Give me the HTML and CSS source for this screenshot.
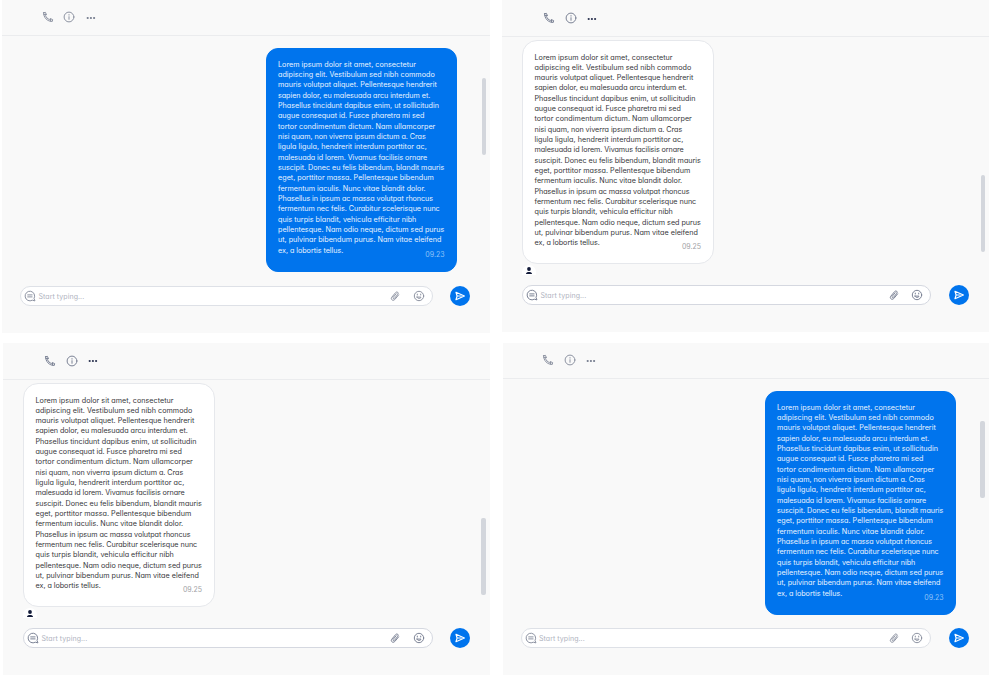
FILE: index.html
```html
<!DOCTYPE html>
<html lang="en">
<head>
<meta charset="utf-8">
<title>Chat</title>
<link rel="stylesheet" href="styles.css">
</head>
<body>
<svg class="sprite" aria-hidden="true">
  <symbol id="phone" viewBox="0 0 12 12"><path d="M1.600 1.700 3.500 1.400 4.300 3.600 3.500 4.700C4.300 6.500 5.500 7.700 7.300 8.500L8.400 7.700 10.600 8.500 10.300 10.400C5.400 10.600 1.400 6.600 1.600 1.700ZM1.800 3.400 4.200 3.500M8.500 7.900 8.600 10.200"/></symbol>
  <symbol id="info" viewBox="0 0 12 12"><circle cx="6" cy="6" r="4.900"/><path d="M6 5.700V8.300M6 3.600V4.100"/></symbol>
  <symbol id="dots" viewBox="0 0 12 12"><circle cx="2.700" cy="6" r="1.100"/><circle cx="5.900" cy="6" r="1.100"/><circle cx="9.100" cy="6" r="1.100"/></symbol>
  <symbol id="bubble" viewBox="0 0 12 12"><path d="M10.200 8.200A4.800 4.800 0 1 0 8.300 10.200L10.600 10.800ZM3.700 4.900H8.100M3.700 6.900H8.100"/></symbol>
  <symbol id="clip" viewBox="0 0 12 12"><path d="M9.600 4.900 5.800 9.500C4.100 11.400 1.200 9.400 2.700 7.300L6.700 2.500C8 1.100 10 2.600 8.900 4.200L5.500 8.300C4.700 9.200 3.500 8.200 4.200 7.300L7.200 3.800"/></symbol>
  <symbol id="smile" viewBox="0 0 12 12"><circle cx="6" cy="6" r="4.700"/><path d="M4.300 4.100V5M7.700 4.100V5M4 7.100H8C7.600 9 4.400 9 4 7.100Z"/></symbol>
  <symbol id="send" viewBox="0 0 12 12"><path d="M2 2.300 10.400 6 2 9.700 3.100 6ZM3.100 6H7"/></symbol>
  <symbol id="user" viewBox="0 0 14 10"><circle cx="7" cy="4" r="1.900"/><path d="M4 9C4 6.400 10 6.400 10 9Z"/></symbol>
</svg>
<main class="board">

<section class="panel p1 soft">
  <header class="bar"><svg class="icon"><use href="#phone"/></svg><svg class="icon"><use href="#info"/></svg><svg class="icon dots"><use href="#dots"/></svg></header>
  <div class="thread">
    <article class="msg sent">
      <p class="text"><span>Lorem ipsum dolor sit amet, consectetur</span> <span>adipiscing elit. Vestibulum sed nibh commodo</span> <span>mauris volutpat aliquet. Pellentesque hendrerit</span> <span>sapien dolor, eu malesuada arcu interdum et.</span> <span>Phasellus tincidunt dapibus enim, ut sollicitudin</span> <span>augue consequat id. Fusce pharetra mi sed</span> <span>tortor condimentum dictum. Nam ullamcorper</span> <span>nisi quam, non viverra ipsum dictum a. Cras</span> <span>ligula ligula, hendrerit interdum porttitor ac,</span> <span>malesuada id lorem. Vivamus facilisis ornare</span> <span>suscipit. Donec eu felis bibendum, blandit mauris</span> <span>eget, porttitor massa. Pellentesque bibendum</span> <span>fermentum iaculis. Nunc vitae blandit dolor.</span> <span>Phasellus in ipsum ac massa volutpat rhoncus</span> <span>fermentum nec felis. Curabitur scelerisque nunc</span> <span>quis turpis blandit, vehicula efficitur nibh</span> <span>pellentesque. Nam odio neque, dictum sed purus</span> <span>ut, pulvinar bibendum purus. Nam vitae eleifend</span> <span>ex, a lobortis tellus.</span></p>
      <time class="time">09.23</time>
    </article>
  </div>
  <footer class="composer">
    <div class="field"><svg class="icon"><use href="#bubble"/></svg><span class="hint">Start typing...</span><svg class="icon"><use href="#clip"/></svg><svg class="icon"><use href="#smile"/></svg></div>
    <button class="send"><svg class="icon"><use href="#send"/></svg></button>
  </footer>
  <i class="scroll"></i>
</section>

<section class="panel p2">
  <header class="bar"><svg class="icon"><use href="#phone"/></svg><svg class="icon"><use href="#info"/></svg><svg class="icon dots"><use href="#dots"/></svg></header>
  <div class="thread">
    <article class="msg">
      <p class="text"><span>Lorem ipsum dolor sit amet, consectetur</span> <span>adipiscing elit. Vestibulum sed nibh commodo</span> <span>mauris volutpat aliquet. Pellentesque hendrerit</span> <span>sapien dolor, eu malesuada arcu interdum et.</span> <span>Phasellus tincidunt dapibus enim, ut sollicitudin</span> <span>augue consequat id. Fusce pharetra mi sed</span> <span>tortor condimentum dictum. Nam ullamcorper</span> <span>nisi quam, non viverra ipsum dictum a. Cras</span> <span>ligula ligula, hendrerit interdum porttitor ac,</span> <span>malesuada id lorem. Vivamus facilisis ornare</span> <span>suscipit. Donec eu felis bibendum, blandit mauris</span> <span>eget, porttitor massa. Pellentesque bibendum</span> <span>fermentum iaculis. Nunc vitae blandit dolor.</span> <span>Phasellus in ipsum ac massa volutpat rhoncus</span> <span>fermentum nec felis. Curabitur scelerisque nunc</span> <span>quis turpis blandit, vehicula efficitur nibh</span> <span>pellentesque. Nam odio neque, dictum sed purus</span> <span>ut, pulvinar bibendum purus. Nam vitae eleifend</span> <span>ex, a lobortis tellus.</span></p>
      <time class="time">09.25</time>
    </article>
    <div class="avatar"><svg><use href="#user"/></svg></div>
  </div>
  <footer class="composer">
    <div class="field"><svg class="icon"><use href="#bubble"/></svg><span class="hint">Start typing...</span><svg class="icon"><use href="#clip"/></svg><svg class="icon"><use href="#smile"/></svg></div>
    <button class="send"><svg class="icon"><use href="#send"/></svg></button>
  </footer>
  <i class="scroll"></i>
</section>

<section class="panel p3">
  <header class="bar"><svg class="icon"><use href="#phone"/></svg><svg class="icon"><use href="#info"/></svg><svg class="icon dots"><use href="#dots"/></svg></header>
  <div class="thread">
    <article class="msg">
      <p class="text"><span>Lorem ipsum dolor sit amet, consectetur</span> <span>adipiscing elit. Vestibulum sed nibh commodo</span> <span>mauris volutpat aliquet. Pellentesque hendrerit</span> <span>sapien dolor, eu malesuada arcu interdum et.</span> <span>Phasellus tincidunt dapibus enim, ut sollicitudin</span> <span>augue consequat id. Fusce pharetra mi sed</span> <span>tortor condimentum dictum. Nam ullamcorper</span> <span>nisi quam, non viverra ipsum dictum a. Cras</span> <span>ligula ligula, hendrerit interdum porttitor ac,</span> <span>malesuada id lorem. Vivamus facilisis ornare</span> <span>suscipit. Donec eu felis bibendum, blandit mauris</span> <span>eget, porttitor massa. Pellentesque bibendum</span> <span>fermentum iaculis. Nunc vitae blandit dolor.</span> <span>Phasellus in ipsum ac massa volutpat rhoncus</span> <span>fermentum nec felis. Curabitur scelerisque nunc</span> <span>quis turpis blandit, vehicula efficitur nibh</span> <span>pellentesque. Nam odio neque, dictum sed purus</span> <span>ut, pulvinar bibendum purus. Nam vitae eleifend</span> <span>ex, a lobortis tellus.</span></p>
      <time class="time">09.25</time>
    </article>
    <div class="avatar"><svg><use href="#user"/></svg></div>
  </div>
  <footer class="composer">
    <div class="field"><svg class="icon"><use href="#bubble"/></svg><span class="hint">Start typing...</span><svg class="icon"><use href="#clip"/></svg><svg class="icon"><use href="#smile"/></svg></div>
    <button class="send"><svg class="icon"><use href="#send"/></svg></button>
  </footer>
  <i class="scroll"></i>
</section>

<section class="panel p4 soft">
  <header class="bar"><svg class="icon"><use href="#phone"/></svg><svg class="icon"><use href="#info"/></svg><svg class="icon dots"><use href="#dots"/></svg></header>
  <div class="thread">
    <article class="msg sent">
      <p class="text"><span>Lorem ipsum dolor sit amet, consectetur</span> <span>adipiscing elit. Vestibulum sed nibh commodo</span> <span>mauris volutpat aliquet. Pellentesque hendrerit</span> <span>sapien dolor, eu malesuada arcu interdum et.</span> <span>Phasellus tincidunt dapibus enim, ut sollicitudin</span> <span>augue consequat id. Fusce pharetra mi sed</span> <span>tortor condimentum dictum. Nam ullamcorper</span> <span>nisi quam, non viverra ipsum dictum a. Cras</span> <span>ligula ligula, hendrerit interdum porttitor ac,</span> <span>malesuada id lorem. Vivamus facilisis ornare</span> <span>suscipit. Donec eu felis bibendum, blandit mauris</span> <span>eget, porttitor massa. Pellentesque bibendum</span> <span>fermentum iaculis. Nunc vitae blandit dolor.</span> <span>Phasellus in ipsum ac massa volutpat rhoncus</span> <span>fermentum nec felis. Curabitur scelerisque nunc</span> <span>quis turpis blandit, vehicula efficitur nibh</span> <span>pellentesque. Nam odio neque, dictum sed purus</span> <span>ut, pulvinar bibendum purus. Nam vitae eleifend</span> <span>ex, a lobortis tellus.</span></p>
      <time class="time">09.23</time>
    </article>
  </div>
  <footer class="composer">
    <div class="field"><svg class="icon"><use href="#bubble"/></svg><span class="hint">Start typing...</span><svg class="icon"><use href="#clip"/></svg><svg class="icon"><use href="#smile"/></svg></div>
    <button class="send"><svg class="icon"><use href="#send"/></svg></button>
  </footer>
  <i class="scroll"></i>
</section>

</main>
</body>
</html>
```
FILE: styles.css
```css
* { box-sizing: border-box; }

body {
  margin: 0;
  background: #fff;
  font-family: Inter, "Liberation Sans", sans-serif;
  font-feature-settings: "cv11";
  font-size: 7.2px;
  overflow: hidden;
}

.sprite { display: none; }

.board {
  display: grid;
  grid-template-columns: 488px 486.500px;
  grid-template-rows: 333px 332px;
  gap: 10px 12px;
  padding-left: 2px;
}

.panel {
  position: relative;
  display: flex;
  flex-direction: column;
  background: #f9f9f9;
  --ink: #7b8295;
  --dots: #2b3350;
  --line: #d5d8e0;
}
.soft { --ink: #8d93a2; --dots: #757c8e; --line: #dee1e7; }

.p1 { --head: 36px; --left: 18px; --right: 33px; --icons: 39.500px; --icon-y: 1px; --top: 11.500px; --bar-y: 78px; --bar-x: 4px; }
.p2 { --head: 37px; --left: 20px; --icons: 41px; --icon-y: 0px; --top: 2.500px; --bar-y: 175px; --bar-x: 3.500px; height: 332px; }
.p3 { --head: 37px; --left: 20px; --icons: 41px; --icon-y: .5px; --top: 2.500px; --bar-y: 175px; --bar-x: 4.500px; margin-left: 1px; }
.p4 { --head: 36px; --left: 17.500px; --right: 32.500px; --icons: 39px; --icon-y: 1px; --top: 11.500px; --bar-y: 78px; --bar-x: 4px; margin-left: 1px; }

.icon {
  width: 12px;
  height: 12px;
  flex: none;
  fill: none;
  stroke: var(--ink);
  stroke-width: 1;
  stroke-linejoin: round;
  stroke-linecap: round;
}

.bar {
  display: flex;
  align-items: center;
  gap: 9.500px;
  height: var(--head);
  padding: 0 0 var(--icon-y) var(--icons);
  border-bottom: 1px solid #ebecee;
}
.dots { fill: var(--dots); stroke: none; margin-top: 1px; }

.thread {
  flex: 1;
  min-height: 0;
  padding: var(--top) var(--right, 0) 0 var(--left);
}

.msg {
  display: flex;
  flex-direction: column;
  width: 191.500px;
  height: 224.500px;
  padding: 12px 11.500px 0;
  border: 1px solid #e6e8ec;
  border-radius: 15px;
  background: #fff;
  color: #38383c;
}
.sent {
  margin-left: auto;
  padding-top: 11px;
  border-color: #0074ed;
  border-radius: 12px;
  background: #0074ed;
  color: #e8f3ff;
}

.text { --pitch: 10.320px; margin: 0; line-height: var(--pitch); white-space: nowrap; }
.sent .text { --pitch: 10.350px; }
.text span { display: block; height: var(--pitch); }
.text span:nth-child(1) { letter-spacing: .02px; }
.text span:nth-child(2) { letter-spacing: .02px; }
.text span:nth-child(4) { letter-spacing: -.046px; }
.text span:nth-child(6) { letter-spacing: -.038px; }
.text span:nth-child(7) { letter-spacing: .044px; }
.text span:nth-child(8) { letter-spacing: -.048px; }
.text span:nth-child(9) { letter-spacing: .033px; }
.text span:nth-child(10) { letter-spacing: -.08px; }
.text span:nth-child(11) { letter-spacing: -.022px; }
.text span:nth-child(12) { letter-spacing: .02px; }
.text span:nth-child(13) { letter-spacing: -.009px; }
.text span:nth-child(14) { letter-spacing: -.07px; }
.text span:nth-child(15) { letter-spacing: -.044px; }
.text span:nth-child(17) { letter-spacing: -.015px; }
.text span:nth-child(18) { letter-spacing: -.008px; }
.text span:nth-child(19) { letter-spacing: -.035px; }

.time {
  align-self: flex-end;
  margin-top: -6.500px;
  line-height: 10px;
  font-size: 7px;
  color: #a2a2a6;
}
.sent .time { margin-top: -6px; color: #8fc2f8; }

.avatar {
  width: 14px;
  height: 9.500px;
  margin-top: 1px;
  overflow: hidden;
  border-radius: 7px 7px 0 0;
  background: #fff;
}
.avatar svg { display: block; width: 14px; height: 10px; fill: #141c3a; }

.composer {
  display: flex;
  align-items: center;
  gap: 17.500px;
  height: 47px;
  padding: 0 20px 27px var(--left);
}

.field {
  display: flex;
  align-items: center;
  flex: 1;
  height: 20px;
  padding: 0 7px 0 3px;
  border: 1px solid var(--line);
  border-radius: 10px;
  background: #fff;
}
.hint { flex: 1; margin-left: 2.500px; font-size: 7px; letter-spacing: .06px; color: #b0b4c0; }
.field .icon:last-child { margin-left: 11.500px; }

.send {
  display: grid;
  place-items: center;
  width: 20px;
  height: 20px;
  padding: 0;
  border: 0;
  border-radius: 50%;
  background: #0074ed;
}
.send .icon { stroke: #fff; stroke-width: 1.200; }

.scroll {
  position: absolute;
  top: var(--bar-y);
  right: var(--bar-x);
  width: 4.500px;
  height: 77px;
  border-radius: 2px;
  background: #d3d6dc;
}
```
